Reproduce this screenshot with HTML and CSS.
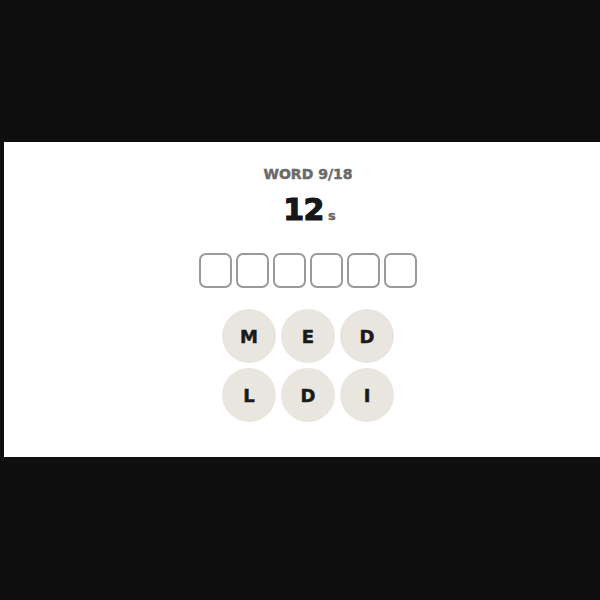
FILE: index.html
```html
<!DOCTYPE html>
<html>
<head>
<meta charset="utf-8">
<link rel="stylesheet" href="styles.css">
</head>
<body>
<div class="stage">
  <div class="card">
    <div class="label">WORD 9/18</div>
    <div class="timer"><span class="num">12</span><span class="unit">s</span></div>
    <div class="slots">
      <div class="slot"></div>
      <div class="slot"></div>
      <div class="slot"></div>
      <div class="slot"></div>
      <div class="slot"></div>
      <div class="slot"></div>
    </div>
    <div class="tiles">
      <div class="tile">M</div>
      <div class="tile">E</div>
      <div class="tile">D</div>
      <div class="tile">L</div>
      <div class="tile">D</div>
      <div class="tile">I</div>
    </div>
  </div>
</div>
</body>
</html>
```
FILE: styles.css
```css
html, body {
  margin: 0;
  padding: 0;
  background: #0f0f0f;
  overflow: hidden;
  height: 600px;
}
.stage {
  padding-top: 142px;
  padding-left: 4px;
  width: 620px;
}
.card {
  width: 608px;
  height: 315px;
  box-sizing: border-box;
  background: #ffffff;
  padding-top: 23px;
  display: flex;
  flex-direction: column;
  align-items: center;
  font-family: "DejaVu Sans", sans-serif;
  font-weight: 700;
}
.label {
  font-size: 14px;
  line-height: 18px;
  color: #6a6a6a;
  -webkit-text-stroke: 0.5px #6a6a6a;
}
.timer {
  margin-top: 11px;
  height: 32px;
  line-height: 32px;
  display: flex;
  align-items: baseline;
  gap: 4px;
  padding-left: 3px;
}
.num {
  font-size: 30px;
  color: #161616;
  letter-spacing: -0.5px;
  -webkit-text-stroke: 1.2px #161616;
}
.unit {
  font-size: 13px;
  color: #6a6a6a;
  -webkit-text-stroke: 0.4px #6a6a6a;
}
.slots {
  margin-top: 27px;
  display: flex;
  gap: 4px;
}
.slot {
  width: 33px;
  height: 35px;
  box-sizing: border-box;
  border: 2px solid #9a9a9a;
  border-radius: 7px;
}
.tiles {
  margin-top: 21px;
  display: grid;
  grid-template-columns: repeat(3, 54px);
  gap: 5px;
}
.tile {
  width: 54px;
  height: 54px;
  border-radius: 50%;
  background: #e9e6df;
  display: flex;
  align-items: center;
  justify-content: center;
  font-size: 18px;
  color: #1a1a1a;
  -webkit-text-stroke: 0.5px #1a1a1a;
}
```
